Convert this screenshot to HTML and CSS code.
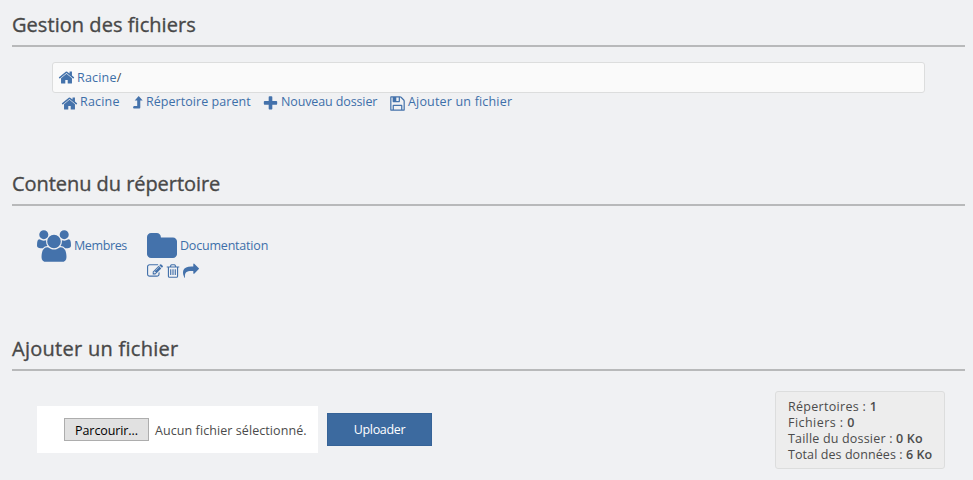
FILE: index.html
```html
<!DOCTYPE html>
<html lang="fr">
<head>
<meta charset="utf-8">
<title>Gestion des fichiers</title>
<link rel="stylesheet" href="styles.css">
</head>
<body>
<svg class="sprite" aria-hidden="true">
<symbol id="home" viewBox="0 0 1792 1792"><path d="M1472 992v480q0 26-19 45t-45 19h-384v-384h-256v384h-384q-26 0-45-19t-19-45v-480q0-1 .5-3t.5-3l575-474 575 474q1 2 1 6zm223-69l-62 74q-8 9-21 11h-3q-13 0-21-7l-692-577-692 577q-12 8-24 7-13-2-21-11l-62-74q-8-10-7-23.5t11-21.5l719-599q32-26 76-26t76 26l244 204v-195q0-14 9-23t23-9h192q14 0 23 9t9 23v408l219 182q10 8 11 21.5t-7 23.5z"/></symbol>
</svg>
<main class="page">
<section class="manager">
<h2 class="t-manage">Gestion des fichiers</h2>
<div class="path"><svg class="icon"><use href="#home"/></svg><a class="t-root">Racine</a><span>/</span></div>
<nav class="actions">
<a class="a-root"><svg class="icon"><use href="#home"/></svg><span class="t-root">Racine</span></a>
<a class="a-parent"><svg class="icon up" viewBox="0 0 10 13"><path d="M5.7 0 9.7 4.6H7.3V11.6Q7.3 12.6 6.3 12.6H.7L0 11.8.7 10H4.2V4.6H1.7Z"/></svg><span class="t-parent">Répertoire parent</span></a>
<a class="a-new"><svg class="icon" viewBox="0 0 1792 1792"><path d="M1600 736v192q0 40-28 68t-68 28h-416v416q0 40-28 68t-68 28h-192q-40 0-68-28t-28-68v-416h-416q-40 0-68-28t-28-68v-192q0-40 28-68t68-28h416v-416q0-40 28-68t68-28h192q40 0 68 28t28 68v416h416q40 0 68 28t28 68z"/></svg><span class="t-new">Nouveau dossier</span></a>
<a class="a-add"><svg class="icon" viewBox="0 0 1792 1792"><path d="M512 1536h768v-384h-768v384zm896 0h128v-896q0-14-10-38.5t-20-34.5l-281-281q-10-10-34-20t-39-10v416q0 40-28 68t-68 28h-576q-40 0-68-28t-28-68v-416h-128v1280h128v-416q0-40 28-68t68-28h832q40 0 68 28t28 68v416zm-384-928v-320q0-13-9.5-22.5t-22.5-9.5h-192q-13 0-22.5 9.5t-9.5 22.5v320q0 13 9.5 22.5t22.5 9.5h192q13 0 22.5-9.5t9.5-22.5zm640 32v928q0 40-28 68t-68 28h-1344q-40 0-68-28t-28-68v-1344q0-40 28-68t68-28h928q40 0 88 20t76 48l280 280q28 28 48 76t20 88z"/></svg><span class="t-add">Ajouter un fichier</span></a>
</nav>
</section>
<section class="content">
<h2 class="t-content">Contenu du répertoire</h2>
<div class="folders">
<a class="entry members"><svg class="users" viewBox="-64 0 1920 1792"><path d="M529 896q-162 5-265 128h-134q-82 0-138-40.5t-56-118.5q0-353 124-353 6 0 43.5 21t97.5 42.5 119 21.5q67 0 133-23-5 37-5 66 0 139 81 256zm1071 637q0 120-73 189.5t-194 69.5h-874q-121 0-194-69.5t-73-189.5q0-53 3.5-103.5t14-109 26.5-108.5 43-97.5 62-81 85.5-53.5 111.5-20q10 0 43 21.5t73 48 107 48 135 21.5 135-21.5 107-48 73-48 43-21.5q61 0 111.5 20t85.5 53.5 62 81 43 97.5 26.5 108.5 14 109 3.5 103.5zm-1024-1277q0 106-75 181t-181 75-181-75-75-181 75-181 181-75 181 75 75 181zm704 384q0 159-112.5 271.5t-271.5 112.5-271.5-112.5-112.5-271.5 112.5-271.5 271.5-112.5 271.5 112.5 112.5 271.5zm576 225q0 78-56 118.5t-138 40.5h-134q-103-123-265-128 81-117 81-256 0-29-5-66 66 23 133 23 59 0 119-21.5t97.5-42.5 43.5-21q124 0 124 353zm-128-609q0 106-75 181t-181 75-181-75-75-181 75-181 181-75 181 75 75 181z"/></svg><span class="t-members">Membres</span></a>
<div class="docs">
<a class="entry"><svg class="folder" viewBox="64 128 1664 1408" preserveAspectRatio="none"><path d="M1728 608v704q0 92-66 158t-158 66h-1216q-92 0-158-66t-66-158v-960q0-92 66-158t158-66h320q92 0 158 66t66 158v32h672q92 0 158 66t66 158z"/></svg><span class="t-docs">Documentation</span></a>
<div class="tools">
<svg class="icon" viewBox="0 0 1792 1792"><path d="M888 1184l116-116-152-152-116 116v56h96v96h56zm440-720q-16-16-33 1l-350 350q-17 17-1 33t33-1l350-350q17-17 1-33zm80 594v190q0 119-84.5 203.5t-203.5 84.5h-832q-119 0-203.5-84.5t-84.5-203.5v-832q0-119 84.5-203.5t203.5-84.5h832q63 0 117 25 15 7 18 23 3 17-9 29l-49 49q-14 14-32 8-23-6-45-6h-832q-66 0-113 47t-47 113v832q0 66 47 113t113 47h832q66 0 113-47t47-113v-126q0-13 9-22l64-64q15-15 35-7t20 29zm-96-738l288 288-672 672h-288v-288zm444 132l-92 92-288-288 92-92q28-28 68-28t68 28l152 152q28 28 28 68t-28 68z"/></svg>
<svg class="icon" viewBox="0 0 1792 1792"><path d="M704 736v576q0 14-9 23t-23 9h-64q-14 0-23-9t-9-23v-576q0-14 9-23t23-9h64q14 0 23 9t9 23zm256 0v576q0 14-9 23t-23 9h-64q-14 0-23-9t-9-23v-576q0-14 9-23t23-9h64q14 0 23 9t9 23zm256 0v576q0 14-9 23t-23 9h-64q-14 0-23-9t-9-23v-576q0-14 9-23t23-9h64q14 0 23 9t9 23zm128 724v-948h-896v948q0 22 7 40.5t14.5 27 10.5 8.5h832q3 0 10.5-8.5t14.5-27 7-40.5zm-672-1076h448l-48-117q-7-9-17-11h-317q-10 2-17 11zm928 32v64q0 14-9 23t-23 9h-96v948q0 83-47 143.5t-113 60.5h-832q-66 0-113-58.5t-47-141.5v-952h-96q-14 0-23-9t-9-23v-64q0-14 9-23t23-9h309l70-167q15-37 54-63t79-26h320q40 0 79 26t54 63l70 167h309q14 0 23 9t9 23z"/></svg>
<svg class="icon" viewBox="0 0 1792 1792"><path d="M1792 640q0 26-19 45l-512 512q-19 19-45 19t-45-19-19-45v-256h-224q-98 0-175.5 6t-154 21.5-133 42.5-105.5 69.5-80 101-48.5 138.5-17.5 181q0 55 5 123 0 6 2.5 23.5t2.5 26.5q0 15-8.5 25t-23.5 10q-16 0-28-17-7-9-13-22t-13.5-30-10.5-24q-127-285-127-451 0-199 53-333 162-403 875-403h224v-256q0-26 19-45t45-19 45 19l512 512q19 19 19 45z"/></svg>
</div>
</div>
</div>
</section>
<section>
<h2 class="t-upload">Ajouter un fichier</h2>
<div class="bottom">
<div class="picker"><span class="browse">Parcourir...</span><span class="t-none">Aucun fichier sélectionné.</span></div>
<div class="submit"><span>Uploader</span></div>
<div class="stats">
<div class="t-s1">Répertoires : <b>1</b></div>
<div class="t-s2">Fichiers : <b>0</b></div>
<div class="t-s3">Taille du dossier : <b>0 Ko</b></div>
<div class="t-s4">Total des données : <b>6 Ko</b></div>
</div>
</div>
</section>
</main>
</body>
</html>
```
FILE: styles.css
```css
* { box-sizing: border-box; }
body { margin: 0; background: #f0f1f3; color: #4b4b4b; font: 12.5px/16px "Open Sans", "Noto Sans", sans-serif; white-space: nowrap; }
svg { fill: #4472ab; flex: none; }
a { color: #3d6fa9; }
.sprite { display: none; }
.page { width: 973px; height: 480px; padding: 5px 8px 0 12px; overflow: hidden; }
h2 { margin: 0; height: 42px; border-bottom: 2px solid #b8b9ba; font-size: 20px; font-weight: 500; line-height: 39px; color: #484848; -webkit-text-stroke: .35px #484848; }
.manager { height: 159px; }
.content { height: 165px; }
.icon { width: 16px; height: 16px; }
.path { display: flex; align-items: center; width: 873px; height: 31px; margin: 15px 0 0 40px; padding: 0 6px; border: 1px solid #dcdddd; border-radius: 3px; background: #fafafa; }
.path .icon { width: 17px; height: 17px; margin: 0 2px 0 -1px; }
.actions { display: flex; padding: 1px 0 0 49px; }
.actions a { display: flex; height: 16px; }
.actions .icon { width: 17px; height: 17px; margin: 1px 2px 0 0; }
.actions .a-new .icon, .actions .a-add .icon { margin: 1px 2px 0 -1px; }
.a-root { width: 72px; }
.a-parent { width: 130px; }
.a-new { width: 127px; }
.actions .up { width: 10px; height: 13px; margin: 2px 3px 0 0; }
.folders { display: flex; padding: 25px 0 0 25px; }
.entry { display: flex; align-items: flex-start; }
.members { width: 110px; }
.users { width: 34px; height: 32px; margin: -1px 3px 0 0; }
.folder { width: 30px; height: 25px; margin: 2px 3px 0 0; }
.entry span { margin-top: 7px; }
.tools { display: flex; gap: 2px; margin-top: 5px; }
.bottom { display: flex; padding: 20px 0 0 25px; }
.picker { display: flex; align-items: center; width: 281px; height: 47px; margin-top: 15px; padding-left: 27px; background: #fff; }
.browse { width: 85px; height: 23px; margin-right: 6px; border: 1px solid #adadad; background: #e1e1e1; color: #000; line-height: 23px; text-align: center; letter-spacing: -.1px; }
.submit { width: 105px; height: 33px; margin: 22px 0 0 9px; border: 1px solid #366397; background: #3c6a9f; color: #fff; line-height: 31px; text-align: center; letter-spacing: -.35px; }
.stats { width: 170px; height: 78px; margin-left: 343px; padding: 7px 12px; border: 1px solid #dcdddd; border-radius: 3px; background: #ededed; }
.stats b { font-weight: 600; }
.t-manage { letter-spacing: .05px; }
.t-content { letter-spacing: -.05px; }
.t-upload { letter-spacing: .28px; }
.t-root { letter-spacing: .2px; }
.t-parent { letter-spacing: .05px; }
.t-new { letter-spacing: -.12px; }
.t-add { letter-spacing: .18px; }
.t-members { letter-spacing: -.38px; }
.t-docs { letter-spacing: -.2px; }
.t-none { letter-spacing: .08px; padding-top: 2px; }
.t-s1 { letter-spacing: .3px; }
.t-s2 { letter-spacing: .45px; }
.t-s3 { letter-spacing: .19px; }
.t-s4 { letter-spacing: .08px; }
```
